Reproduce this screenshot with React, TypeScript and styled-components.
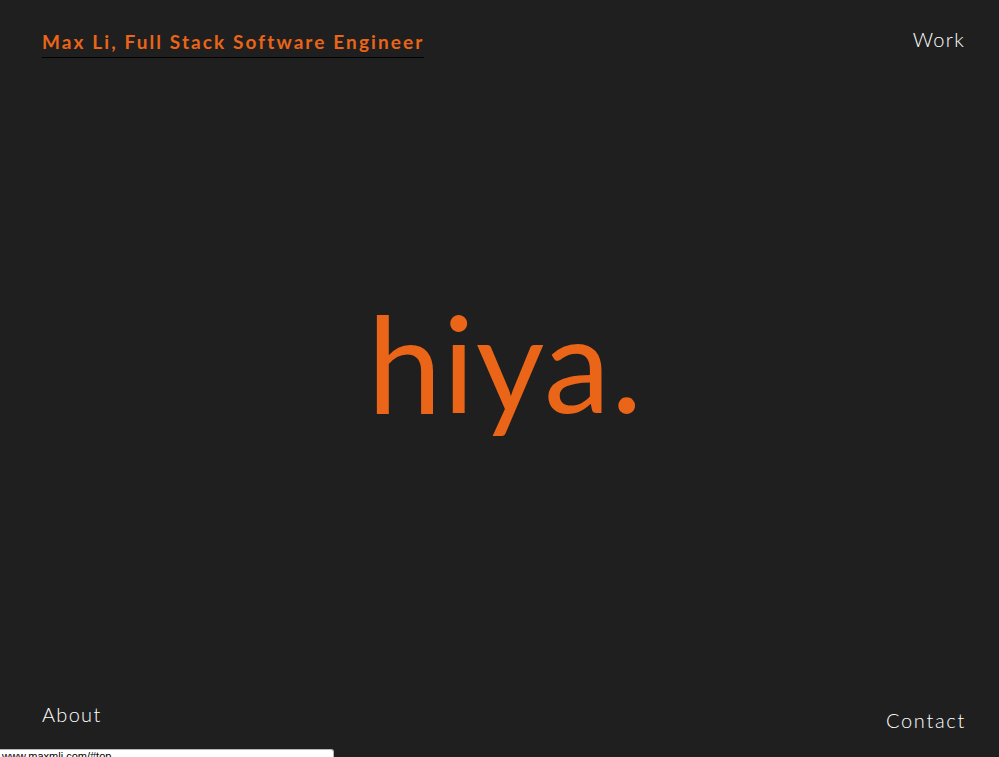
import React from 'react'
import styled, { createGlobalStyle } from 'styled-components'

const GlobalStyle = createGlobalStyle`
    html, body {
        margin: 0;
        padding: 0;
        background: #1f1f1f;
    }
    body {
        font-family: Lato, "Open Sans", "Liberation Sans", sans-serif;
    }
`

const App: React.FC = () => {
    return (
        <>
            <GlobalStyle />
            <Page>
                <TopRow>
                    <Brand href="#top">Max Li, Full Stack Software Engineer</Brand>
                    <NavLink href="#work">Work</NavLink>
                </TopRow>
                <Hero>
                    <Hello>hiya.</Hello>
                </Hero>
                <BottomRow>
                    <NavLink href="#about">About</NavLink>
                    <NavLink href="#contact" $drop>Contact</NavLink>
                </BottomRow>
                <StatusBar>www.maxmli.com/#top</StatusBar>
            </Page>
        </>
    )
}

const Page = styled.div`
    position: relative;
    display: flex;
    flex-direction: column;
    height: 757px;
    box-sizing: border-box;
    padding: 27px 34px 19px 42px;
    overflow: hidden;
    background: #1f1f1f;
`
const TopRow = styled.header`
    display: flex;
    justify-content: space-between;
    align-items: flex-start;
`
const Brand = styled.a`
    font-size: 19px;
    font-weight: bold;
    color: #ea6518;
    letter-spacing: 2.1px;
    text-decoration: none;
    line-height: 30px;
    padding-bottom: 0;
    border-bottom: 1px solid #000;
`
const NavLink = styled.a<{ $drop?: boolean }>`
    font-size: 20px;
    font-weight: 300;
    color: #ffffff;
    letter-spacing: ${p => (p.$drop ? '1.7px' : '1.3px')};
    text-decoration: none;
    line-height: 26px;
    margin-top: ${p => (p.$drop ? '5px' : '-1px')};
    margin-right: ${p => (p.$drop ? '-1px' : '0')};
`
const Hero = styled.main`
    flex: 1;
    display: flex;
    align-items: center;
    justify-content: center;
    padding-left: 4px;
    padding-bottom: 38px;
`
const Hello = styled.h1`
    margin: 0;
    font-size: 133px;
    font-weight: 400;
    color: #ea6518;
    letter-spacing: 1px;
    line-height: 1;
`
const BottomRow = styled.footer`
    display: flex;
    justify-content: space-between;
    align-items: flex-start;
    height: 36px;
`
const StatusBar = styled.div`
    position: absolute;
    left: 0;
    bottom: -6px;
    width: 334px;
    height: 14px;
    box-sizing: border-box;
    padding: 0 2px;
    background: #ffffff;
    border: 1px solid #b5b5b5;
    border-left: none;
    border-radius: 0 3px 0 0;
    font-family: "Liberation Sans", sans-serif;
    font-size: 11px;
    line-height: 12px;
    color: #000;
`

export default App
